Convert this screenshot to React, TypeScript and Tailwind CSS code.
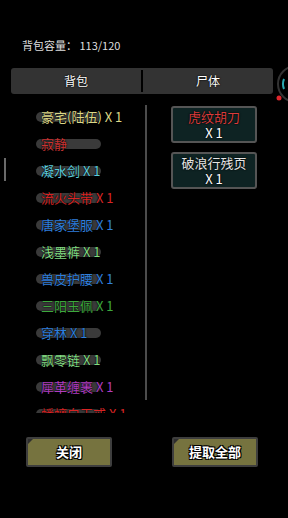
import React from "react";

const items: { name: string; color: string }[] = [
  { name: "豪宅(陆伍) X 1", color: "text-[#dcd787]" },
  { name: "寂静", color: "text-[#c83434]" },
  { name: "凝水剑 X 1", color: "text-[#5cccdc]" },
  { name: "流火头带 X 1", color: "text-[#d82424]" },
  { name: "唐家堡服 X 1", color: "text-[#2f7fdc]" },
  { name: "浅墨裤 X 1", color: "text-[#82dc82]" },
  { name: "兽皮护腰 X 1", color: "text-[#2f7fdc]" },
  { name: "三阳玉佩 X 1", color: "text-[#3da83d]" },
  { name: "穿林 X 1", color: "text-[#2f7fdc]" },
  { name: "飘零链 X 1", color: "text-[#82dc82]" },
  { name: "犀革缠裹 X 1", color: "text-[#b03cc0]" },
  { name: "蟠螭白玉戒 X 1", color: "text-[#d82424]" },
];

const loot = [
  { name: "虎纹胡刀", color: "text-[#d83c3c]" },
  { name: "破浪行残页", color: "text-[#e6e6e6]" },
];

const outline = "[text-shadow:0_0_2px_#000,0_0_1px_#000]";
const heavy = "[text-shadow:1px_1px_0_#000,-1px_-1px_0_#000,1px_-1px_0_#000,-1px_1px_0_#000]";

function ActionButton({ label }: { label: string }) {
  return (
    <button
      type="button"
      className="relative w-[86px] h-[30px] bg-[#76733f] border-2 border-[#3e3e3e] rounded-[2px] flex items-center justify-center"
    >
      <span className="absolute left-0 top-0 w-0 h-0 border-t-[5px] border-t-[#2e2e2e] border-r-[5px] border-r-transparent" />
      <span className={`text-white text-[13px] font-bold ${heavy}`}>{label}</span>
    </button>
  );
}

export default function App() {
  return (
    <div
      className="relative w-[288px] h-[518px] bg-black overflow-hidden"
      style={{ fontFamily: '"Noto Sans CJK SC", "Noto Sans", sans-serif' }}
    >
      <div className="pt-[38px] pl-[22px] h-[52px] text-[11px] leading-[14px] text-[#dedede]">
        背包容量： 113/120
      </div>

      <div className="mt-[16px] ml-[11px] w-[262px] h-[26px] flex bg-[#333333] rounded-[3px] text-[12px] text-white">
        <div className={`flex-1 flex items-center justify-center ${outline}`}>背包</div>
        <div className="w-[2px] my-[2px] bg-black" />
        <div className={`flex-1 flex items-center justify-center ${outline}`}>尸体</div>
      </div>

      <div className="mt-[9px] h-[310px] flex">
        <div className="relative w-[145px] h-full overflow-hidden">
          <div className="absolute left-[4px] top-[55px] w-[2px] h-[23px] bg-[#6a6a6a]" />
          {items.map((it) => (
            <div key={it.name} className="relative h-[27px] flex items-center pl-[41px]">
              <span className="absolute left-[36px] top-[9px] w-[65px] h-[10px] rounded-full bg-[#3a3a3a]" />
              <span className={`relative text-[13px] whitespace-nowrap ${it.color} ${outline}`}>{it.name}</span>
            </div>
          ))}
        </div>
        <div className="w-[2px] mt-[2px] h-[295px] bg-[#4c4c4c]" />
        <div className="pl-[24px] pt-[3px] flex flex-col gap-[9px]">
          {loot.map((l) => (
            <div
              key={l.name}
              className="w-[86px] h-[37px] bg-[#0e2323] border-2 border-[#555] rounded-[3px] flex flex-col items-center justify-center text-[13px] leading-[16px]"
            >
              <span className={`${l.color} ${outline}`}>{l.name}</span>
              <span className={`text-white ${outline}`}>X 1</span>
            </div>
          ))}
        </div>
      </div>

      <div className="mt-[24px] flex pl-[26px] gap-[60px]">
        <ActionButton label="关闭" />
        <ActionButton label="提取全部" />
      </div>

      <svg className="absolute left-[272px] top-[62px]" width="16" height="44" viewBox="0 0 16 44">
        <circle cx="24" cy="22" r="18" fill="none" stroke="#333" strokeWidth="2" />
        <path d="M12 17 A 13 13 0 0 0 12 27" fill="none" stroke="#2aa8b0" strokeWidth="2" />
        <circle cx="7" cy="36" r="2.5" fill="#e0262c" />
      </svg>
    </div>
  );
}
